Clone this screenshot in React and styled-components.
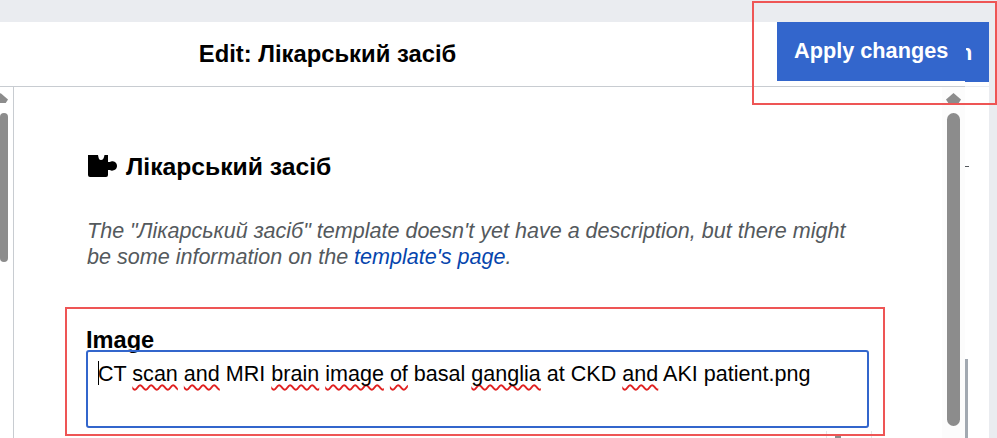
import React from "react";
import styled, { createGlobalStyle } from "styled-components";

const GlobalStyle = createGlobalStyle`
  html, body {
    margin: 0;
    padding: 0;
    background: #ffffff;
  }
  body {
    font-family: "Liberation Sans", Arial, sans-serif;
    color: #000;
    overflow: hidden;
  }
`;

const Page = styled.div`
  position: relative;
  width: 997px;
  height: 438px;
  overflow: hidden;
  display: flex;
  flex-direction: column;
  background: #eaecf0;
`;

const TopBand = styled.div`
  height: 22px;
  flex: none;
`;

const Dialog = styled.div`
  width: 989px;
  height: 416px;
  background: #fff;
  display: flex;
  flex-direction: column;
`;

const Header = styled.header`
  height: 64px;
  flex: none;
  display: grid;
  grid-template-columns: 655px 122px 212px;
  border-bottom: 1px solid #c8ccd1;
  box-sizing: content-box;
`;

const Title = styled.h1`
  grid-column: 1;
  margin: 0;
  align-self: center;
  text-align: center;
  font-size: 23.8px;
  font-weight: 700;
  line-height: 64px;
`;

const ApplyButton = styled.button`
  grid-column: 3;
  position: relative;
  height: 59px;
  border: 0;
  padding: 0 0 2px 17px;
  display: flex;
  align-items: center;
  background: #3366cc;
  color: #fff;
  font-family: inherit;
  font-size: 21.7px;
  font-weight: 700;

  /* the strip of the button behind it that shows at the right edge */
  &::after {
    content: "";
    position: absolute;
    right: 0;
    top: 59px;
    width: 24px;
    height: 1px;
    background: #3366cc;
  }

  &::before {
    content: "";
    position: absolute;
    right: 0;
    top: 64px;
    width: 24px;
    height: 1px;
    background: #eaecf0;
  }
`;

const ClippedGlyph = styled.span`
  width: 6px;
  margin-left: 18px;
  margin-top: 4px;
  overflow: hidden;
  direction: rtl;
  font-size: 21.7px;
`;

const Body = styled.div`
  flex: 1;
  min-height: 0;
  display: flex;
`;

const LeftRail = styled.div`
  width: 13px;
  flex: none;
  border-right: 1px solid #c8ccd1;
  padding-top: 6px;
  overflow: hidden;
`;

const Arrow = styled.div`
  width: 15px;
  height: 10px;
  background: #8c8c8c;
  clip-path: polygon(50% 0, 100% 65%, 85% 100%, 15% 100%, 0 65%);
  margin-left: ${(p) => p.$left || 0}px;
`;

const Thumb = styled.div`
  width: ${(p) => p.$width}px;
  height: ${(p) => p.$height}px;
  margin-top: 10px;
  margin-left: ${(p) => p.$left || 0}px;
  background: #8c8c8c;
  border-radius: 7px;
`;

const Content = styled.main`
  flex: 1;
  min-width: 0;
  padding: 66px 0 0 72px;
`;

const TemplateHeading = styled.h2`
  margin: 0 0 0 1px;
  display: flex;
  align-items: center;
  gap: 9px;
  height: 28px;
  font-size: 24.7px;
  font-weight: 700;
`;

const Description = styled.p`
  margin: 37px 0 0 1px;
  width: 765px;
  font-size: 21.55px;
  line-height: 26px;
  font-style: italic;
  color: #54595d;

  a {
    color: #0645ad;
    text-decoration: none;
  }
`;

const Field = styled.div`
  margin-top: 58px;
  width: 783px;
`;

const FieldLabel = styled.label`
  display: block;
  font-size: 23.6px;
  font-weight: 700;
  line-height: 24px;
  height: 22px;
`;

const InputBox = styled.div`
  position: relative;
  box-sizing: border-box;
  height: 78px;
  border: 2px solid #3366cc;
  border-radius: 3px;
  padding: 9px 10px;
  font-size: 21.55px;
  line-height: 26px;
  white-space: nowrap;
`;

const Caret = styled.span`
  position: absolute;
  left: 10px;
  top: 9px;
  width: 1px;
  height: 24px;
  background: #000;
`;

const Misspelled = styled.span`
  text-decoration: underline wavy #e02020 1.5px;
  text-decoration-skip-ink: none;
  text-underline-offset: 3px;
`;

const ScrollColumn = styled.div`
  width: 23px;
  flex: none;
  background: #fcfcfc;
  padding-top: 6px;
`;

const MarginRail = styled.div`
  width: 24px;
  flex: none;
  position: relative;
`;

const Tick = styled.span`
  position: absolute;
  left: 0;
  top: 79px;
  width: 4px;
  height: 1px;
  background: #54595d;
`;

const RailLine = styled.span`
  position: absolute;
  left: 0;
  top: 272px;
  bottom: 0;
  width: 3px;
  background: #a2a9b1;
`;

const PopupCorner = styled.div`
  position: absolute;
  left: 826px;
  top: 431px;
  width: 44px;
  height: 10px;
  border: 1px solid #e4e6e9;
  border-top: 0;
  background: #fff;

  &::after {
    content: "";
    position: absolute;
    left: 8px;
    top: 5px;
    width: 6px;
    height: 2px;
    background: #8c8c8c;
  }
`;

const Annotation = styled.div`
  position: absolute;
  box-sizing: border-box;
  border: 2px solid #ee5555;
  left: ${(p) => p.$x}px;
  top: ${(p) => p.$y}px;
  width: ${(p) => p.$w}px;
  height: ${(p) => p.$h}px;
`;

function PuzzleIcon() {
  return (
    <svg width="30" height="24" viewBox="0 0 30 24" aria-hidden="true">
      <path
        fill="#000"
        d="M1 0h10c.5 3 1 5 3 5s3-2 3.500-5H21v7h2c1.500-1.500 7-.5 7 4s-5.500 5.500-7 4h-2v5a2 2 0 0 1-2 2H3a2 2 0 0 1-2-2z"
      />
    </svg>
  );
}

export default function App() {
  return (
    <Page>
      <GlobalStyle />
      <TopBand />
      <Dialog>
        <Header>
          <Title>Edit: Лікарський засіб</Title>
          <ApplyButton>
            Apply changes
            <ClippedGlyph>n</ClippedGlyph>
          </ApplyButton>
        </Header>
        <Body>
          <LeftRail>
            <Arrow $left={-7} />
            <Thumb $width={8} $height={149} />
          </LeftRail>
          <Content>
            <TemplateHeading>
              <PuzzleIcon />
              Лікарський засіб
            </TemplateHeading>
            <Description>
              The "Лікарський засіб" template doesn't yet have a description, but there might be some
              information on the <a href="#page">template's page</a>.
            </Description>
            <Field>
              <FieldLabel>Image</FieldLabel>
              <InputBox>
                <Caret />
                CT <Misspelled>scan</Misspelled> <Misspelled>and</Misspelled> MRI{" "}
                <Misspelled>brain</Misspelled> <Misspelled>image</Misspelled>{" "}
                <Misspelled>of</Misspelled> basal <Misspelled>ganglia</Misspelled> at CKD{" "}
                <Misspelled>and</Misspelled> AKI patient.png
              </InputBox>
            </Field>
          </Content>
          <ScrollColumn>
            <Arrow $left={4} />
            <Thumb $width={13} $height={313} $left={5} />
          </ScrollColumn>
          <MarginRail>
            <Tick />
            <RailLine />
          </MarginRail>
        </Body>
      </Dialog>
      <PopupCorner />
      <Annotation $x={752} $y={1} $w={245} $h={104} />
      <Annotation $x={65} $y={307} $w={820} $h={129} />
    </Page>
  );
}
